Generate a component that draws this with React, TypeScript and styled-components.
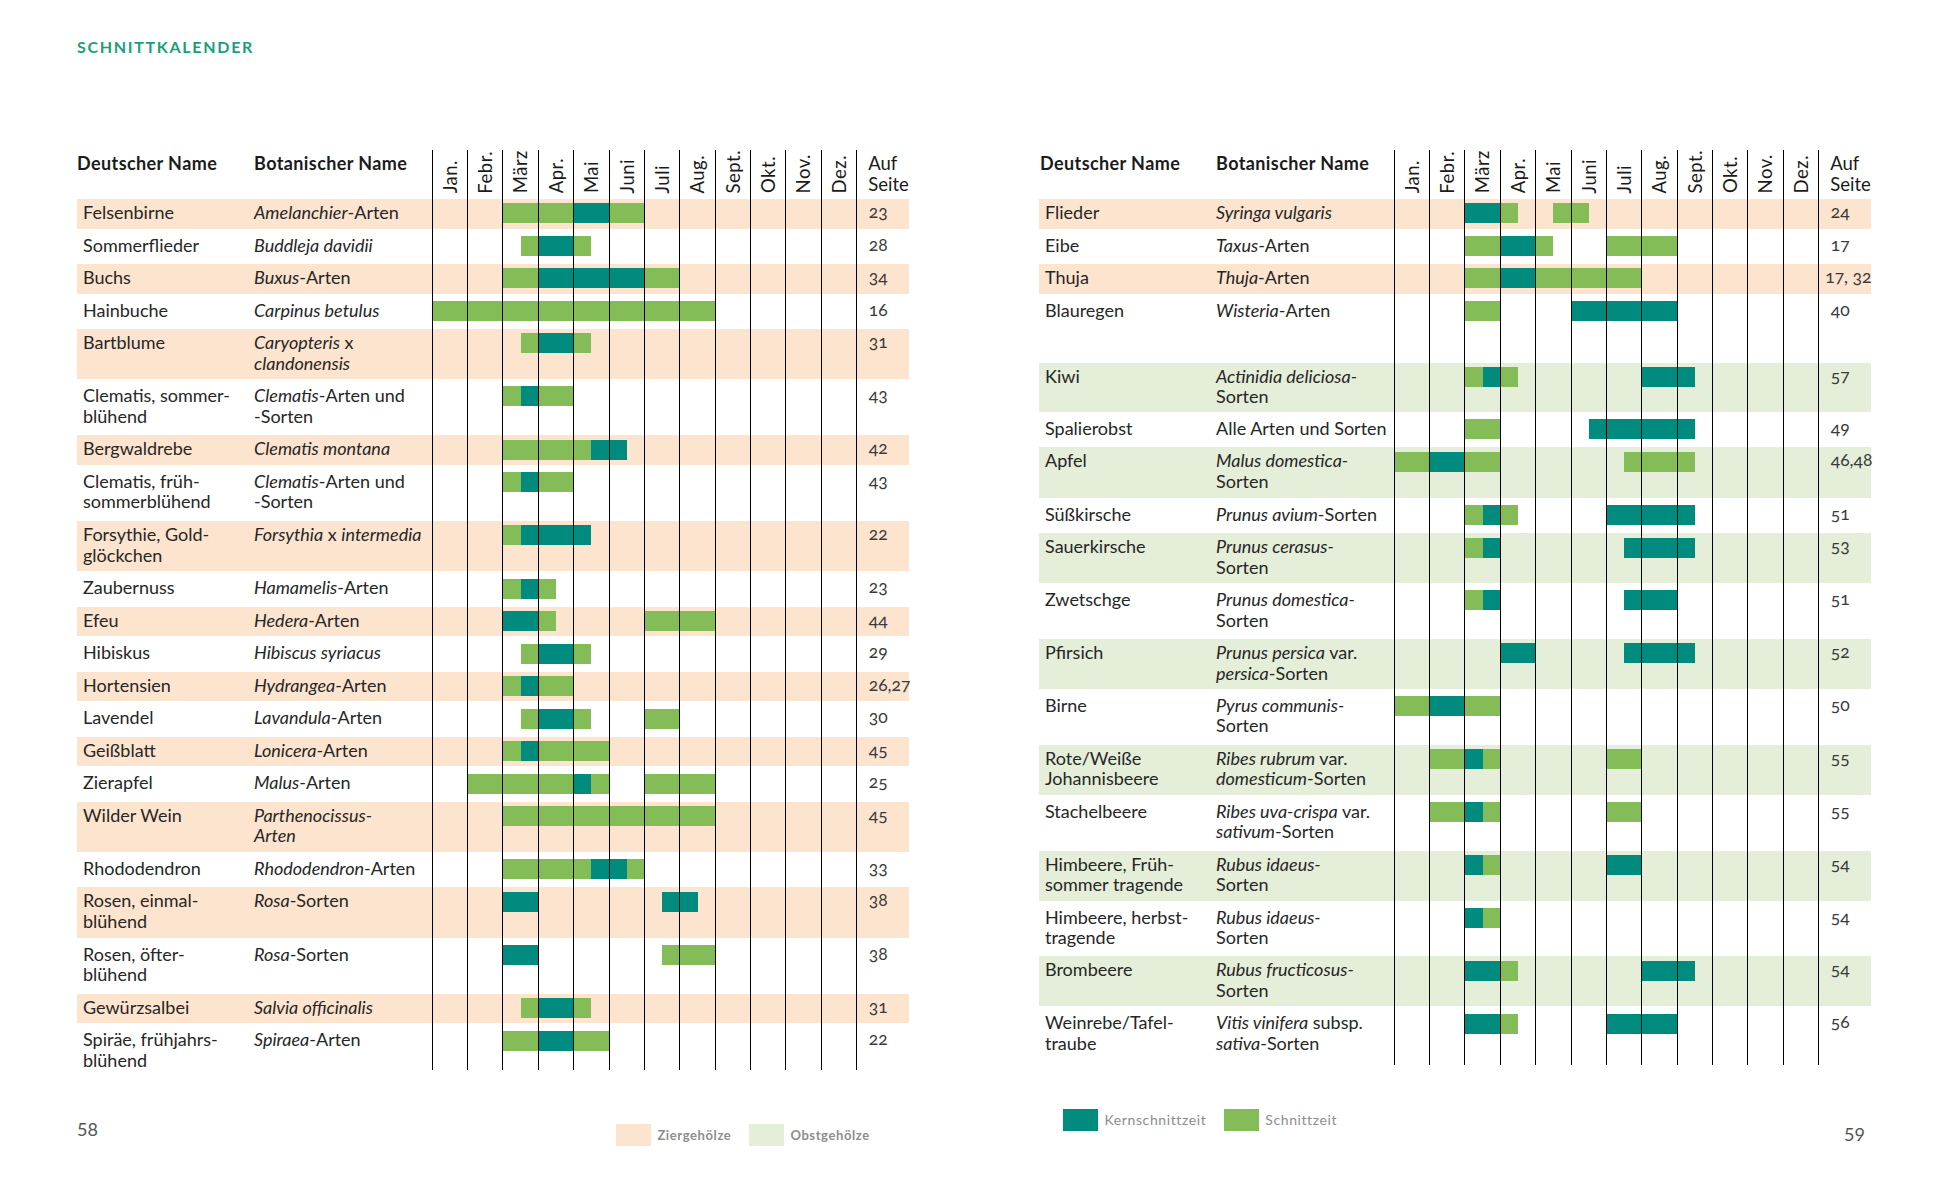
import React from 'react';
import styled, { createGlobalStyle } from 'styled-components';

const C = {
  peach: '#fde4cf',
  mint: '#e4eed8',
  green: '#84bd58',
  teal: '#008b7f',
  ink: '#262626',
  title: '#1a9f7b',
  grey: '#8d8d8d',
};

const FONT = `Lato, "Open Sans", "Noto Sans", sans-serif`;
const COLS = '177px 177.7px repeat(12, 35.38px) 1fr';
const MONTHS = ['Jan.', 'Febr.', 'März', 'Apr.', 'Mai', 'Juni', 'Juli', 'Aug.', 'Sept.', 'Okt.', 'Nov.', 'Dez.'];

type Kind = '.' | 'g' | 't';
type Band = 'none' | 'peach' | 'mint';
interface Plant {
  de: string;
  bo: string;
  page: string;
  bars: string;
  h: number;
  band: Band;
}

const bars = (spec: string): Kind[] => {
  const out: Kind[] = Array(24).fill('.');
  spec.split(' ').filter(Boolean).forEach((tok) => {
    const k = tok[0] as Kind;
    const [a, b] = tok.slice(1).split('-').map(Number);
    for (let i = a; i <= (b ?? a); i++) out[i] = k;
  });
  return out;
};

const S = 32.5;
const D = 53.2;
const D2 = 52.9;

const LEFT: Plant[] = [
  { de: 'Felsenbirne', bo: '*Amelanchier*-Arten', page: '23', bars: 'g4-7 t8-9 g10-11', h: S, band: 'peach' },
  { de: 'Sommerflieder', bo: '*Buddleja davidii*', page: '28', bars: 'g5 t6-7 g8', h: S, band: 'none' },
  { de: 'Buchs', bo: '*Buxus*-Arten', page: '34', bars: 'g4-5 t6-11 g12-13', h: S, band: 'peach' },
  { de: 'Hainbuche', bo: '*Carpinus betulus*', page: '16', bars: 'g0-15', h: S, band: 'none' },
  { de: 'Bartblume', bo: '*Caryopteris* x\n*clandonensis*', page: '31', bars: 'g5 t6-7 g8', h: D, band: 'peach' },
  { de: 'Clematis, sommer-\nblühend', bo: '*Clematis*-Arten und\n-Sorten', page: '43', bars: 'g4 t5 g6-7', h: D, band: 'none' },
  { de: 'Bergwaldrebe', bo: '*Clematis montana*', page: '42', bars: 'g4-8 t9-10', h: S, band: 'peach' },
  { de: 'Clematis, früh-\nsommerblühend', bo: '*Clematis*-Arten und\n-Sorten', page: '43', bars: 'g4 t5 g6-7', h: D, band: 'none' },
  { de: 'Forsythie, Gold-\nglöckchen', bo: '*Forsythia* x *intermedia*', page: '22', bars: 'g4 t5-8', h: D, band: 'peach' },
  { de: 'Zaubernuss', bo: '*Hamamelis*-Arten', page: '23', bars: 'g4 t5 g6', h: S, band: 'none' },
  { de: 'Efeu', bo: '*Hedera*-Arten', page: '44', bars: 't4-5 g6 g12-15', h: S, band: 'peach' },
  { de: 'Hibiskus', bo: '*Hibiscus syriacus*', page: '29', bars: 'g5 t6-7 g8', h: S, band: 'none' },
  { de: 'Hortensien', bo: '*Hydrangea*-Arten', page: '26,27', bars: 'g4 t5 g6-7', h: S, band: 'peach' },
  { de: 'Lavendel', bo: '*Lavandula*-Arten', page: '30', bars: 'g5 t6-7 g8 g12-13', h: S, band: 'none' },
  { de: 'Geißblatt', bo: '*Lonicera*-Arten', page: '45', bars: 'g4 t5 g6-9', h: S, band: 'peach' },
  { de: 'Zierapfel', bo: '*Malus*-Arten', page: '25', bars: 'g2-7 t8 g9 g12-15', h: S, band: 'none' },
  { de: 'Wilder Wein', bo: '*Parthenocissus-\nArten*', page: '45', bars: 'g4-15', h: D, band: 'peach' },
  { de: 'Rhododendron', bo: '*Rhododendron*-Arten', page: '33', bars: 'g4-8 t9-10 g11', h: S, band: 'none' },
  { de: 'Rosen, einmal-\nblühend', bo: '*Rosa*-Sorten', page: '38', bars: 't4-5 t13-14', h: D, band: 'peach' },
  { de: 'Rosen, öfter-\nblühend', bo: '*Rosa*-Sorten', page: '38', bars: 't4-5 g13-15', h: D, band: 'none' },
  { de: 'Gewürzsalbei', bo: '*Salvia officinalis*', page: '31', bars: 'g5 t6-7 g8', h: S, band: 'peach' },
  { de: 'Spiräe, frühjahrs-\nblühend', bo: '*Spiraea*-Arten', page: '22', bars: 'g4-5 t6-7 g8-9', h: 40.5, band: 'none' },
];

const RIGHT: Plant[] = [
  { de: 'Flieder', bo: '*Syringa vulgaris*', page: '24', bars: 't4-5 g6 g9-10', h: S, band: 'peach' },
  { de: 'Eibe', bo: '*Taxus*-Arten', page: '17', bars: 'g4-5 t6-7 g8 g12-15', h: S, band: 'none' },
  { de: 'Thuja', bo: '*Thuja*-Arten', page: '17, 32', bars: 'g4-5 t6-7 g8-13', h: S, band: 'peach' },
  { de: 'Blauregen', bo: '*Wisteria*-Arten', page: '40', bars: 'g4-5 t10-15', h: 66.3, band: 'none' },
  { de: 'Kiwi', bo: '*Actinidia deliciosa-*\nSorten', page: '57', bars: 'g4 t5 g6 t14-16', h: 52, band: 'mint' },
  { de: 'Spalierobst', bo: 'Alle Arten und Sorten', page: '49', bars: 'g4-5 t11-16', h: S, band: 'none' },
  { de: 'Apfel', bo: '*Malus domestica-*\nSorten', page: '46,48', bars: 'g0-1 t2-3 g4-5 g13-16', h: 53.5, band: 'mint' },
  { de: 'Süßkirsche', bo: '*Prunus avium*-Sorten', page: '51', bars: 'g4 t5 g6 t12-16', h: 32.5, band: 'none' },
  { de: 'Sauerkirsche', bo: '*Prunus cerasus-*\nSorten', page: '53', bars: 'g4 t5 t13-16', h: D2, band: 'mint' },
  { de: 'Zwetschge', bo: '*Prunus domestica-*\nSorten', page: '51', bars: 'g4 t5 t13-15', h: D2, band: 'none' },
  { de: 'Pfirsich', bo: '*Prunus persica* var.\n*persica*-Sorten', page: '52', bars: 't6-7 t13-16', h: D2, band: 'mint' },
  { de: 'Birne', bo: '*Pyrus communis-*\nSorten', page: '50', bars: 'g0-1 t2-3 g4-5', h: D2, band: 'none' },
  { de: 'Rote/Weiße\nJohannisbeere', bo: '*Ribes rubrum* var.\n*domesticum*-Sorten', page: '55', bars: 'g2-3 t4 g5 g12-13', h: D2, band: 'mint' },
  { de: 'Stachelbeere', bo: '*Ribes uva-crispa* var.\n*sativum*-Sorten', page: '55', bars: 'g2-3 t4 g5 g12-13', h: D2, band: 'none' },
  { de: 'Himbeere, Früh-\nsommer tragende', bo: '*Rubus idaeus-*\nSorten', page: '54', bars: 't4 g5 t12-13', h: D2, band: 'mint' },
  { de: 'Himbeere, herbst-\ntragende', bo: '*Rubus idaeus-*\nSorten', page: '54', bars: 't4 g5', h: D2, band: 'none' },
  { de: 'Brombeere', bo: '*Rubus fructicosus-*\nSorten', page: '54', bars: 't4-5 g6 t14-16', h: D2, band: 'mint' },
  { de: 'Weinrebe/Tafel-\ntraube', bo: '*Vitis vinifera* subsp.\n*sativa*-Sorten', page: '56', bars: 't4-5 g6 t12-15', h: 55.5, band: 'none' },
];

const GlobalStyle = createGlobalStyle`
  html, body { margin: 0; padding: 0; background: #fff; }
  body { font-family: ${FONT}; color: ${C.ink}; overflow: hidden; }
`;

const Spread = styled.main`
  display: flex;
  gap: 130px;
  padding-left: 77px;
  height: 1181px;
  box-sizing: border-box;
`;

const Page = styled.section<{ $pb: number }>`
  width: 832px;
  height: 1181px;
  box-sizing: border-box;
  display: flex;
  flex-direction: column;
  padding-bottom: ${(p) => p.$pb}px;
`;

const PageHead = styled.header`
  height: 150px;
  box-sizing: border-box;
  padding-top: 36.5px;
  flex: none;
`;

const Title = styled.h1`
  margin: 0;
  font: 700 16px/19.2px ${FONT};
  letter-spacing: 1.7px;
  color: ${C.title};
`;

const Table = styled.div`
  display: flex;
  flex-direction: column;
`;

const HeadRow = styled.div`
  display: grid;
  grid-template-columns: ${COLS};
  height: 49px;
`;

const HeadCell = styled.div<{ $pl: number }>`
  padding: 2.5px 0 0 ${(p) => p.$pl}px;
  font: 700 18px/21px ${FONT};
  letter-spacing: 0.4px;
  color: #1b1b1b;
  white-space: nowrap;
`;

const MonthHead = styled.div`
  border-left: 1px solid #000;
  display: flex;
  align-items: flex-end;
  justify-content: center;
  padding-bottom: 6px;
`;

const MonthLabel = styled.span`
  writing-mode: vertical-rl;
  transform: rotate(180deg);
  font: 400 18.5px/1 ${FONT};
  letter-spacing: 0.5px;
  color: #1b1b1b;
  white-space: nowrap;
`;

const SeiteHead = styled.div`
  border-left: 1px solid #000;
  padding: 2.5px 0 0 11px;
  font: 400 18.5px/21px ${FONT};
  color: #1b1b1b;
`;

const bandColor = (b: Band) => (b === 'peach' ? C.peach : b === 'mint' ? C.mint : 'transparent');

const Row = styled.div<{ $h: number; $band: Band }>`
  display: grid;
  grid-template-columns: ${COLS};
  height: ${(p) => p.$h}px;
  background: linear-gradient(
    to bottom,
    ${(p) => bandColor(p.$band)} calc(100% - 3px),
    transparent calc(100% - 3px)
  );
`;

const NameCell = styled.div<{ $pl: number }>`
  padding: 3px 0 0 ${(p) => p.$pl}px;
  font: 400 18px/20.5px ${FONT};
  color: ${C.ink};
  white-space: nowrap;
`;

const Ital = styled.em`
  font-style: italic;
`;

const MonthCell = styled.div`
  border-left: 1px solid #000;
  display: flex;
  align-items: flex-start;
  padding-top: 4.3px;
`;

const Half = styled.div<{ $k: Kind }>`
  flex: 1;
  height: 20px;
  background: ${(p) => (p.$k === 'g' ? C.green : p.$k === 't' ? C.teal : 'transparent')};
`;

const SeiteCell = styled.div<{ $wide: boolean }>`
  border-left: 1px solid #000;
  padding: 3px 0 0 ${(p) => (p.$wide ? 6 : 11.5)}px;
  font: 400 17.5px/20.5px ${FONT};
  font-variant-numeric: oldstyle-nums;
  color: #3a3a3a;
  white-space: nowrap;
`;

const Footer = styled.footer`
  margin-top: auto;
  height: 40px;
  display: flex;
  align-items: flex-start;
  flex: none;
`;

const PageNum = styled.div<{ $mt: number; $push?: boolean }>`
  margin-top: ${(p) => p.$mt}px;
  margin-left: ${(p) => (p.$push ? 'auto' : '0')};
  margin-right: ${(p) => (p.$push ? '6px' : '0')};
  font: 400 18px/21px ${FONT};
  color: #555;
`;

const Legend = styled.div<{ $mt: number; $ml: number }>`
  display: flex;
  align-items: center;
  margin-top: ${(p) => p.$mt}px;
  margin-left: ${(p) => p.$ml}px;
`;

const Swatch = styled.span<{ $c: string }>`
  width: 35px;
  height: 22px;
  background: ${(p) => p.$c};
  margin-right: 6.5px;
`;

const LegendText = styled.span<{ $bold?: boolean }>`
  font: ${(p) => (p.$bold ? 700 : 400)} ${(p) => (p.$bold ? 13 : 14)}px/1 ${FONT};
  letter-spacing: 0.6px;
  color: ${C.grey};
  margin-right: 17.5px;
  white-space: nowrap;
`;

const Rich: React.FC<{ text: string }> = ({ text }) => (
  <>
    {text.split('*').map((part, i) => {
      const content = part.split('\n').map((l, j) => (
        <React.Fragment key={j}>
          {j > 0 && <br />}
          {l}
        </React.Fragment>
      ));
      return i % 2 === 1 ? <Ital key={i}>{content}</Ital> : <React.Fragment key={i}>{content}</React.Fragment>;
    })}
  </>
);

const CalendarTable: React.FC<{ rows: Plant[]; dePad: number }> = ({ rows, dePad }) => (
  <Table>
    <HeadRow>
      <HeadCell $pl={dePad}>Deutscher Name</HeadCell>
      <HeadCell $pl={0}>Botanischer Name</HeadCell>
      {MONTHS.map((m) => (
        <MonthHead key={m}>
          <MonthLabel>{m}</MonthLabel>
        </MonthHead>
      ))}
      <SeiteHead>
        Auf
        <br />
        Seite
      </SeiteHead>
    </HeadRow>
    {rows.map((r, idx) => {
      const b = bars(r.bars);
      return (
        <Row key={idx} $h={r.h} $band={r.band}>
          <NameCell $pl={6}>
            <Rich text={r.de} />
          </NameCell>
          <NameCell $pl={0}>
            <Rich text={r.bo} />
          </NameCell>
          {MONTHS.map((m, mi) => (
            <MonthCell key={m}>
              <Half $k={b[mi * 2]} />
              <Half $k={b[mi * 2 + 1]} />
            </MonthCell>
          ))}
          <SeiteCell $wide={r.page.includes(' ')}>{r.page}</SeiteCell>
        </Row>
      );
    })}
  </Table>
);

export default function App() {
  return (
    <>
      <GlobalStyle />
      <Spread>
        <Page $pb={22}>
          <PageHead>
            <Title>SCHNITTKALENDER</Title>
          </PageHead>
          <CalendarTable rows={LEFT} dePad={0} />
          <Footer>
            <PageNum $mt={0}>58</PageNum>
            <Legend $mt={5} $ml={518}>
              <Swatch $c={C.peach} />
              <LegendText $bold>Ziergehölze</LegendText>
              <Swatch $c={C.mint} />
              <LegendText $bold>Obstgehölze</LegendText>
            </Legend>
          </Footer>
        </Page>
        <Page $pb={32}>
          <PageHead />
          <CalendarTable rows={RIGHT} dePad={1} />
          <Footer>
            <Legend $mt={0} $ml={24}>
              <Swatch $c={C.teal} />
              <LegendText>Kernschnittzeit</LegendText>
              <Swatch $c={C.green} />
              <LegendText>Schnittzeit</LegendText>
            </Legend>
            <PageNum $mt={14.5} $push>
              59
            </PageNum>
          </Footer>
        </Page>
      </Spread>
    </>
  );
}
